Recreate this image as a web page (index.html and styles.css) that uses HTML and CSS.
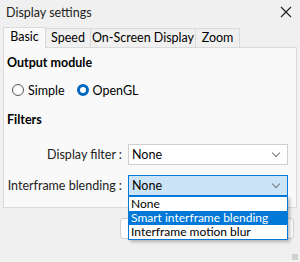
FILE: index.html
```html
<!DOCTYPE html>
<html lang="en">
<head>
<meta charset="UTF-8" />
<title>Display settings</title>
<link rel="stylesheet" href="styles.css">
</head>
<body>
<div class="window">
    <div class="titlebar">
        <span class="title">Display settings</span>
        <span class="close">
            <svg width="12" height="12" viewBox="0 0 12 12"><path d="M1 1 L11 11 M11 1 L1 11" stroke="#222" stroke-width="1.2" fill="none"/></svg>
        </span>
    </div>

    <div class="tabs">
        <div class="tab active">Basic</div>
        <div class="tab">Speed</div>
        <div class="tab">On-Screen Display</div>
        <div class="tab">Zoom</div>
    </div>

    <div class="pane">
        <div class="group-title">Output module</div>
        <div class="radios">
            <label class="radio"><span class="dot"></span>Simple</label>
            <label class="radio checked"><span class="dot"></span>OpenGL</label>
        </div>

        <div class="group-title">Filters</div>
        <div class="field">
            <span class="field-label">Display filter :</span>
            <div class="combo">None<span class="chev"></span></div>
        </div>
        <div class="field">
            <span class="field-label">Interframe blending :</span>
            <div class="combo open">None<span class="chev"></span>
                <ul class="popup">
                    <li>None</li>
                    <li class="hl">Smart interframe blending</li>
                    <li>Interframe motion blur</li>
                </ul>
            </div>
        </div>
    </div>

    <div class="footer">
        <!-- label hidden under the open popup -->
        <button class="btn" aria-label="OK"></button>
    </div>
    <span class="grip"></span>
</div>
</body>
</html>
```

FILE: styles.css
```css
* {
    box-sizing: border-box;
}
body {
    margin: 0;
    font-family: Lato, "Liberation Sans", sans-serif;
    font-size: 12.5px;
    color: #000;
    background: #f0f0f0;
    white-space: nowrap;
}
.window {
    width: 300px;
    height: 262px;
    position: relative;
    background: #f0f0f0;
}
.titlebar {
    height: 24px;
    display: flex;
    align-items: center;
    justify-content: space-between;
    padding: 0 4px 0 6px;
    color: #222;
}
.close {
    display: flex;
    width: 20px;
    justify-content: center;
}
.tabs {
    display: flex;
    align-items: flex-end;
    padding-left: 3px;
    height: 23px;
}
.tab {
    height: 19px;
    line-height: 18px;
    text-align: center;
    border: 1px solid #dadada;
    border-bottom: none;
    border-left: none;
    background: #f0f0f0;
}
.tab.active {
    width: 43px;
    height: 21px;
    background: #f9f9f9;
    border-left: 1px solid #dadada;
    position: relative;
    top: 1px;
}
.tab:nth-child(2) { width: 45px; }
.tab:nth-child(3) { width: 105px; }
.tab:nth-child(4) { width: 44px; }
.pane {
    margin: 0 3px;
    height: 161px;
    background: #f9f9f9;
    border: 1px solid #dadada;
    padding: 5px 0 0 3px;
}
.group-title {
    font-weight: bold;
    height: 20px;
    line-height: 20px;
}
.radios {
    display: flex;
    gap: 12px;
    padding: 9px 0 0 5px;
    height: 37px;
}
.radio {
    display: flex;
    align-items: center;
    gap: 4px;
    height: 16px;
}
.dot {
    width: 12px;
    height: 12px;
    border: 1px solid #555;
    border-radius: 50%;
    background: #fff;
}
.radio.checked .dot {
    border: 3px solid #0067c0;
    background: #fff;
}
.field {
    display: flex;
    align-items: center;
    margin-top: 14px;
}
.field + .field {
    margin-top: 10px;
}
.field-label {
    width: 121px;
    text-align: right;
    padding-right: 6px;
    color: #222;
}
.combo {
    width: 160px;
    height: 21px;
    border: 1px solid #d0d0d0;
    background: #fff;
    padding-left: 3px;
    line-height: 19px;
    position: relative;
}
.combo.open {
    background: #cce4f7;
    border-color: #0078d7;
}
.chev {
    position: absolute;
    right: 8px;
    top: 5px;
    width: 6px;
    height: 6px;
    border-right: 1px solid #777;
    border-bottom: 1px solid #777;
    transform: rotate(45deg);
}
.popup {
    position: absolute;
    left: -1px;
    top: 20px;
    width: 160px;
    margin: 0;
    padding: 0;
    list-style: none;
    background: #fff;
    border: 1px solid #0078d7;
    box-shadow: 2px 2px 3px rgba(0,0,0,0.25);
    z-index: 2;
    font-size: 12px;
}
.popup li {
    height: 14px;
    line-height: 14px;
    padding-left: 2px;
    overflow: hidden;
}
.popup li.hl {
    background: #0078d7;
    color: #fff;
}
.footer {
    display: flex;
    justify-content: flex-end;
    padding: 10px 6px 0 0;
}
.btn {
    width: 174px;
    height: 21px;
    border: 1px solid #d0d0d0;
    background: #fdfdfd;
    border-radius: 3px;
    font: inherit;
}
.grip {
    position: absolute;
    right: 2px;
    bottom: 2px;
    width: 6px;
    height: 6px;
    background: radial-gradient(circle, #aaa 0.6px, transparent 0.8px) 0 0 / 2px 2px;
}
```
